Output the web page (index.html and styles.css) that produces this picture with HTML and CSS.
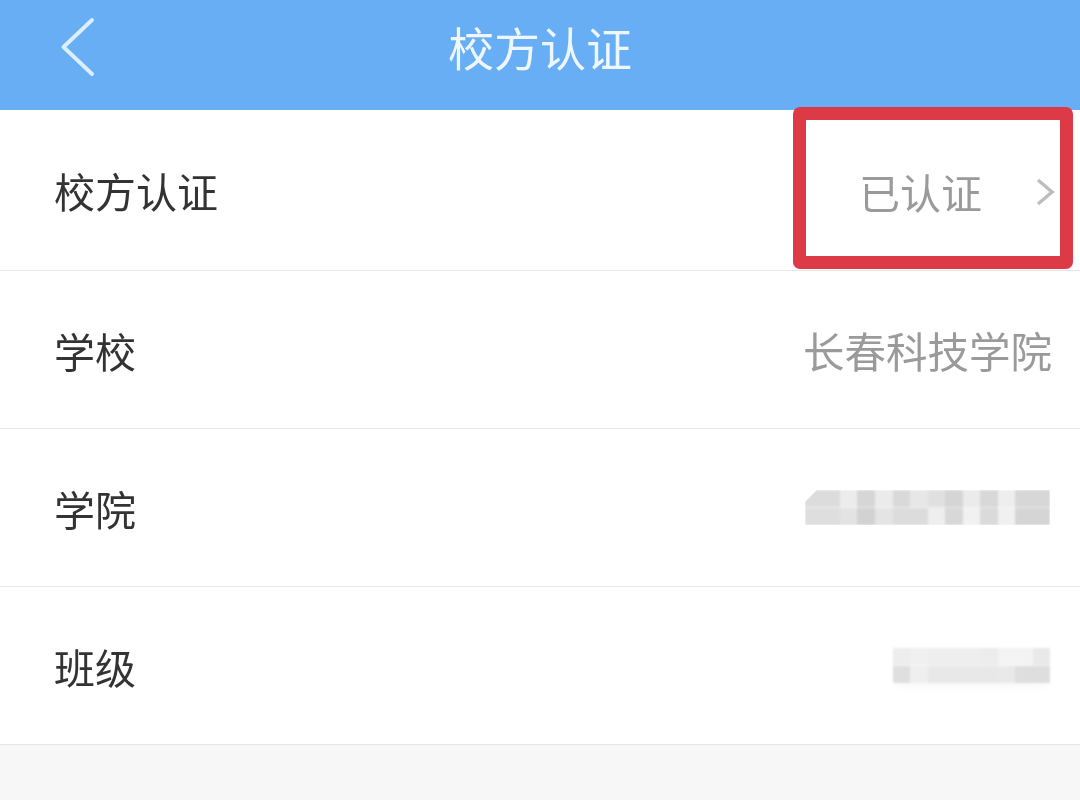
FILE: index.html

```html
<!DOCTYPE html>
<html lang="zh-CN">
<head>
    <meta charset="UTF-8">
    <meta name="viewport" content="width=device-width, initial-scale=1.0">
    <title>校方认证</title>
    <link rel="stylesheet" href="styles.css">
</head>
<body>
    <div class="page">
        <header class="top-bar">
            <svg class="back" width="36" height="60" viewBox="0 0 36 60">
                <path d="M32 3 L3.5 30 L32 57" fill="none" stroke="#dcefff" stroke-width="3.8" stroke-linecap="round" stroke-linejoin="round"/>
            </svg>
            <h1 class="title">校方认证</h1>
        </header>
        <div class="list">
            <div class="row row-first">
                <span class="label">校方认证</span>
                <div class="status">
                    <span class="value">已认证</span>
                    <svg class="arrow" width="20" height="30" viewBox="0 0 20 30">
                        <path d="M3 3 L17 15 L3 27" fill="none" stroke="#bcbcbc" stroke-width="3.4"/>
                    </svg>
                </div>
                <div class="mark"></div>
            </div>
            <div class="row">
                <span class="label">学校</span>
                <span class="value value-wide">长春科技学院</span>
            </div>
            <div class="row">
                <span class="label">学院</span>
                <div class="mosaic mosaic-college"></div>
            </div>
            <div class="row">
                <span class="label">班级</span>
                <div class="mosaic mosaic-class"></div>
            </div>
        </div>
    </div>
</body>
</html>
```

FILE: styles.css

```css
* {
    margin: 0;
    padding: 0;
    box-sizing: border-box;
}

body {
    background: #f7f7f7;
    font-family: "Noto Sans CJK SC", "Liberation Sans", sans-serif;
}

.page {
    width: 1080px;
    height: 800px;
    overflow: hidden;
}

.top-bar {
    height: 110px;
    padding-bottom: 18px;
    background: #67aef5;
    display: flex;
    align-items: center;
    justify-content: center;
    position: relative;
}

.back {
    position: absolute;
    left: 60px;
    top: 17px;
    filter: blur(0.5px);
}

.title {
    font-size: 46px;
    font-weight: 400;
    color: #eef7ff;
    filter: blur(0.5px);
}

.list {
    background: #fff;
}

.row {
    height: 158px;
    padding: 0 28px 0 54px;
    border-bottom: 1px solid #e6e6e6;
    display: flex;
    align-items: center;
    justify-content: space-between;
    position: relative;
}

.row-first {
    height: 161px;
    padding-right: 25px;
}

.label {
    font-size: 41px;
    color: #333;
    filter: blur(0.5px);
}

.value {
    font-size: 41px;
    color: #9a9a9a;
    filter: blur(0.5px);
}

.value-wide {
    font-size: 41.5px;
}

.status {
    padding-top: 2px;
    display: flex;
    align-items: center;
    gap: 53px;
}

.arrow {
    margin-top: 2px;
    filter: blur(0.5px);
}

/* red box drawn over the screenshot */
.mark {
    position: absolute;
    left: 793px;
    top: -3px;
    width: 280px;
    height: 162px;
    border: 13px solid #dd3a48;
    border-radius: 7px;
}

.mosaic {
    height: 35px;
    filter: blur(1px);
    box-shadow: 0 9px 8px -5px rgba(0, 0, 0, 0.03);
}

.mosaic-college {
    width: 245px;
    margin-right: 2px;
    background:
        linear-gradient(90deg,
            #dcdcdc 0 35px, #ececec 35px 52px, #d6d6d6 52px 70px, #ebebeb 70px 88px,
            #d9d9d9 88px 105px, #e7e7e7 105px 123px, #e0e0e0 123px 140px, #d5d5d5 140px 158px,
            #ebebeb 158px 175px, #d8d8d8 175px 193px, #eeeeee 193px 210px, #d7d7d7 210px 245px)
            0 0 / 100% 50% no-repeat,
        linear-gradient(90deg,
            #dedede 0 35px, #e3e3e3 35px 52px, #d2d2d2 52px 70px, #e4e4e4 70px 88px,
            #dcdcdc 88px 123px, #eeeeee 123px 140px, #d8d8d8 140px 158px,
            #f1f1f1 158px 175px, #dadada 175px 193px, #f0f0f0 193px 210px, #d5d5d5 210px 245px)
            0 100% / 100% 50% no-repeat;
    clip-path: polygon(12px 0, 100% 0, 100% 100%, 0 100%, 0 12px);
}

.mosaic-class {
    width: 157px;
    margin-right: 2px;
    background:
        linear-gradient(90deg,
            #ededed 0 17px, #f0f0f0 17px 35px, #eeeeee 35px 88px, #ececec 88px 105px,
            #f3f3f3 105px 140px, #e9e9e9 140px 157px)
            0 0 / 100% 50% no-repeat,
        linear-gradient(90deg,
            #dfdfdf 0 17px, #efefef 17px 35px, #e8e8e8 35px 105px, #e9e9e9 105px 122px,
            #dedede 122px 157px)
            0 100% / 100% 50% no-repeat;
}
```
